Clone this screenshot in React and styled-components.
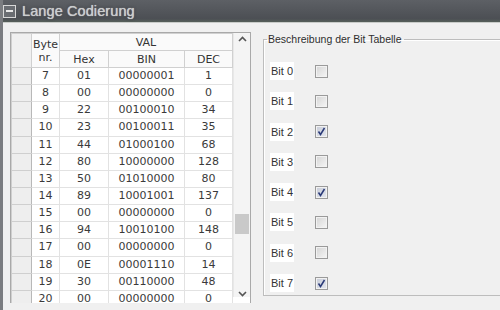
import React from 'react'
import styled, { createGlobalStyle } from 'styled-components'

const Global = createGlobalStyle`
  html, body { margin: 0; padding: 0; }
  body {
    width: 500px;
    height: 310px;
    overflow: hidden;
    background: #f0f0f0;
    font-family: "DejaVu Sans", "Liberation Sans", sans-serif;
  }
`

const Window = styled.div`
  width: 500px;
  height: 310px;
  display: flex;
  flex-direction: column;
  border-left: 3px solid #7a7c80;
  box-sizing: border-box;
  overflow: hidden;
`

const TitleBar = styled.div`
  height: 22px;
  flex: none;
  margin-left: -3px;
  display: flex;
  align-items: center;
  gap: 6px;
  padding-left: 3px;
  background: linear-gradient(#5d6065, #4c4f54 85%, #56605a);
  border-bottom: 1px solid #c9ccc9;
`

const TitleIcon = styled.span`
  width: 11px;
  height: 11px;
  border: 1px solid #d8d8d8;
  background: #6a6d72;
  display: flex;
  align-items: center;
  justify-content: center;
  &:after {
    content: "";
    width: 7px;
    height: 2px;
    background: #e8e8e8;
  }
`

const Title = styled.span`
  font-family: "Liberation Sans", "DejaVu Sans", sans-serif;
  font-size: 14.5px;
  color: #cbcdcf;
  letter-spacing: 0.1px;
  text-shadow: 0 0 1px #e0e0e0, 0 0 3px #2c2e30;
`

const Body = styled.div`
  flex: 1;
  display: flex;
  align-items: flex-start;
  padding: 9px 0 0 7px;
  gap: 12px;
`

const TableFrame = styled.div`
  flex: none;
  display: flex;
  border: 1px solid #a9a9a9;
  border-bottom: none;
  background: #fff;
  height: 270px;
  overflow: hidden;
`

const Grid = styled.table`
  border-collapse: collapse;
  table-layout: fixed;
  width: 221px;
  font-size: 11px;
  color: #3a3a3a;
  font-family: "DejaVu Sans", "Liberation Sans", sans-serif;
`

const HeadCell = styled.th`
  font-weight: normal;
  height: 16px;
  padding: 0;
  text-align: center;
  border: 1px solid #d0d0d0;
  background: ${p => (p.$corner ? '#f0f0f0' : '#fafafa')};
  color: #333;
`

const RowHead = styled.td`
  background: #eeeeee;
  border: 1px solid #cfcfcf;
  border-right: 1px solid #b8b8b8;
  padding: 0;
`

const Cell = styled.td`
  height: 16.15px;
  padding: 0;
  text-align: center;
  border: 1px solid #e2e2e2;
  line-height: 16px;
  white-space: nowrap;
`

const Scrollbar = styled.div`
  width: 16px;
  flex: none;
  background: #f4f4f4;
  border-left: 1px solid #e8e8e8;
  display: flex;
  flex-direction: column;
  align-items: center;
  padding-top: 3px;
  height: 261px;
`

const Arrow = styled.svg`
  width: 9px;
  height: 6px;
  flex: none;
`

const Track = styled.div`
  flex: 1;
  width: 100%;
  padding-top: 172px;
  box-sizing: border-box;
`

const Thumb = styled.div`
  width: 14px;
  height: 20px;
  margin: 0 auto;
  background: #c9c9c9;
`

const Group = styled.fieldset`
  flex: none;
  margin: 1px 0 0 0;
  padding: 17px 0 0 6px;
  width: 270px;
  height: 263px;
  box-sizing: border-box;
  border: 1px solid #bdbdbd;
  border-right: none;
  box-shadow: inset 1px 1px 0 #ffffff;
  display: flex;
  flex-direction: column;
  gap: 12.3px;
  font-size: 11px;
  font-family: "Liberation Sans", "DejaVu Sans", sans-serif;
`

const Legend = styled.legend`
  padding: 0 2px 0 1px;
  margin-left: -3px;
  color: #2e2e2e;
  font-size: 10.5px;
`

const BitRow = styled.div`
  display: flex;
  align-items: center;
  gap: 21px;
  height: 18px;
`

const BitLabel = styled.span`
  width: 24px;
  height: 18px;
  background: #fff;
  color: #333;
  display: flex;
  align-items: center;
  justify-content: center;
  font-size: 11px;
`

const Check = styled.span`
  width: 11px;
  height: 11px;
  border: 1px solid #9a9a9a;
  background: ${p => (p.$on ? 'linear-gradient(135deg, #c8ccd8, #e4e7ee)' : 'linear-gradient(135deg, #d4d4d4, #f6f6f6)')};
  box-shadow: inset 0 0 0 1px #f2f2f2;
  display: flex;
  align-items: center;
  justify-content: center;
`

const rows = [
  [7, '01', '00000001', 1],
  [8, '00', '00000000', 0],
  [9, '22', '00100010', 34],
  [10, '23', '00100011', 35],
  [11, '44', '01000100', 68],
  [12, '80', '10000000', 128],
  [13, '50', '01010000', 80],
  [14, '89', '10001001', 137],
  [15, '00', '00000000', 0],
  [16, '94', '10010100', 148],
  [17, '00', '00000000', 0],
  [18, '0E', '00001110', 14],
  [19, '30', '00110000', 48],
  [20, '00', '00000000', 0],
]

const bits = [false, false, true, false, true, false, false, true]

export default function App() {
  return (
    <Window>
      <Global />
      <TitleBar>
        <TitleIcon />
        <Title>Lange Codierung</Title>
      </TitleBar>
      <Body>
        <TableFrame>
          <Grid>
            <colgroup>
              <col style={{ width: 20 }} />
              <col style={{ width: 28 }} />
              <col style={{ width: 49 }} />
              <col style={{ width: 76 }} />
              <col style={{ width: 48 }} />
            </colgroup>
            <thead>
              <tr>
                <HeadCell $corner rowSpan={2} />
                <HeadCell rowSpan={2}>Byte<br />nr.</HeadCell>
                <HeadCell colSpan={3}>VAL</HeadCell>
              </tr>
              <tr>
                <HeadCell>Hex</HeadCell>
                <HeadCell>BIN</HeadCell>
                <HeadCell>DEC</HeadCell>
              </tr>
            </thead>
            <tbody>
              {rows.map(r => (
                <tr key={r[0]}>
                  <RowHead />
                  <Cell>{r[0]}</Cell>
                  <Cell>{r[1]}</Cell>
                  <Cell>{r[2]}</Cell>
                  <Cell>{r[3]}</Cell>
                </tr>
              ))}
            </tbody>
          </Grid>
          <Scrollbar>
            <Arrow viewBox="0 0 9 6">
              <path d="M1 5 L4.5 1.5 L8 5" fill="none" stroke="#555" strokeWidth="1.6" />
            </Arrow>
            <Track>
              <Thumb />
            </Track>
            <Arrow viewBox="0 0 9 6">
              <path d="M1 1 L4.5 4.5 L8 1" fill="none" stroke="#555" strokeWidth="1.6" />
            </Arrow>
          </Scrollbar>
        </TableFrame>
        <Group>
          <Legend>Beschreibung der Bit Tabelle</Legend>
          {bits.map((on, i) => (
            <BitRow key={i}>
              <BitLabel>Bit {i}</BitLabel>
              <Check $on={on}>
                {on && (
                  <svg width="9" height="9" viewBox="0 0 9 9">
                    <path d="M1.5 4.5 L3.5 7.5 L7.5 1" fill="none" stroke="#2a3a78" strokeWidth="1.5" />
                  </svg>
                )}
              </Check>
            </BitRow>
          ))}
        </Group>
      </Body>
    </Window>
  )
}
